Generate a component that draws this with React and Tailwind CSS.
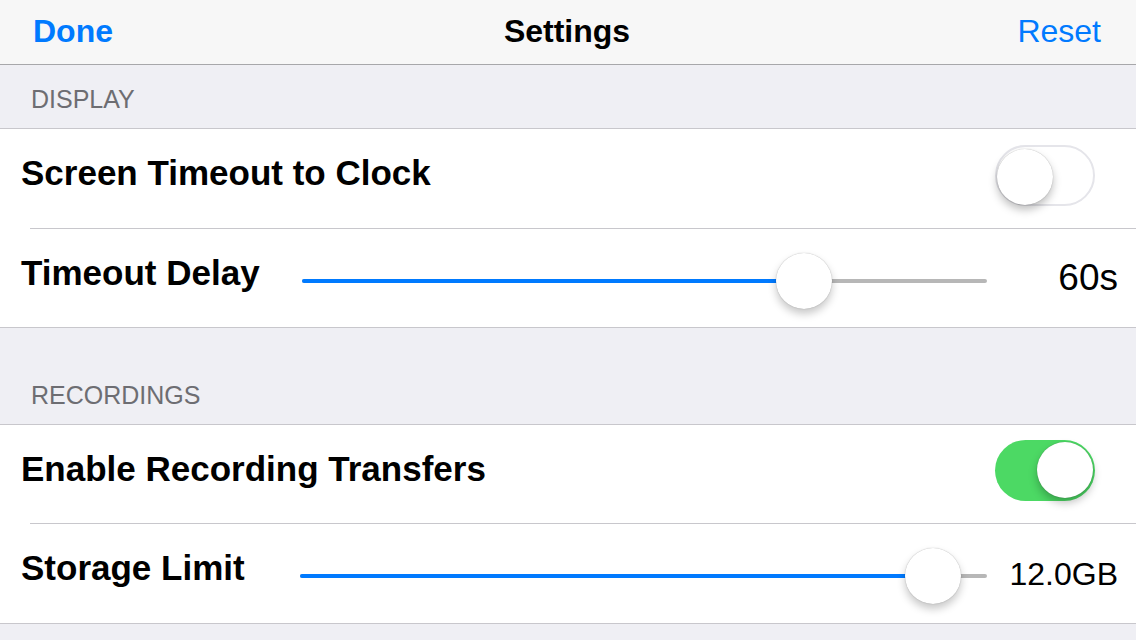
import React from "react";

const FONT = { fontFamily: '"Liberation Sans", Arial, sans-serif' };

function Toggle({ on }) {
  return (
    <div
      className={
        "relative mb-[7px] h-[61px] w-[100px] rounded-full " +
        (on ? "bg-[#4cd964]" : "border-2 border-[#e5e5ea] bg-white")
      }
    >
      <div
        className={
          "absolute top-[2px] h-[56px] w-[56px] rounded-full bg-white shadow-[0_5px_8px_rgba(0,0,0,0.25),0_0_1px_rgba(0,0,0,0.35)] " +
          (on ? "right-[2px]" : "left-0 top-0")
        }
      />
    </div>
  );
}

function Slider({ value }) {
  return (
    <div className="relative mt-[5px] h-14 flex-1">
      <div className="absolute left-0 right-0 top-1/2 h-[4px] -translate-y-1/2 rounded-full bg-[#b7b7b7]" />
      <div
        className="absolute left-0 top-1/2 h-[4px] -translate-y-1/2 rounded-full bg-[#007aff]"
        style={{ width: `${value * 100}%` }}
      />
      <div
        className="absolute top-1/2 h-[56px] w-[56px] -translate-x-1/2 -translate-y-1/2 rounded-full bg-white shadow-[0_5px_8px_rgba(0,0,0,0.22),0_0_1px_rgba(0,0,0,0.35)]"
        style={{ left: `${value * 100}%` }}
      />
    </div>
  );
}

function SectionHeader({ title, tall }) {
  return (
    <div
      className={
        "flex items-end border-b border-[#c8c7cc] bg-[#efeff4] pl-[31px] text-[25px] text-[#6d6d72] " +
        (tall ? "h-[97px] pb-[10px]" : "h-[64px] pb-[10px]")
      }
    >
      {title}
    </div>
  );
}

export default function App() {
  return (
    <div className="h-[640px] w-[1136px] overflow-hidden bg-[#efeff4]" style={FONT}>
      <div className="flex h-[65px] items-center justify-between border-b border-[#a7a7aa] bg-[#f7f7f7] pl-[33px] pr-[35px] pb-[3px]">
        <span className="w-[200px] text-[32px] font-bold text-[#007aff]">Done</span>
        <span className="text-[32px] font-bold text-black">Settings</span>
        <span className="w-[200px] text-right text-[32px] text-[#007aff]">Reset</span>
      </div>

      <SectionHeader title="DISPLAY" />
      <div className="bg-white">
        <div className="flex h-[99px] items-center justify-between pl-[21px] pr-[41px]">
          <span className="pb-[10px] text-[35px] font-bold text-black">Screen Timeout to Clock</span>
          <Toggle on={false} />
        </div>
        <div className="ml-[30px] h-px bg-[#c8c7cc]" />
        <div className="flex h-[99px] items-center border-b border-[#c8c7cc] pl-[21px] pr-[18px]">
          <span className="w-[281px] pb-[10px] text-[35px] font-bold text-black">Timeout Delay</span>
          <Slider value={0.733} />
          <span className="w-[131px] text-right text-[37px] text-black">60s</span>
        </div>
      </div>

      <SectionHeader title="RECORDINGS" tall />
      <div className="bg-white">
        <div className="flex h-[98px] items-center justify-between pl-[21px] pr-[41px]">
          <span className="pb-[10px] text-[35px] font-bold text-black">Enable Recording Transfers</span>
          <Toggle on />
        </div>
        <div className="ml-[30px] h-px bg-[#c8c7cc]" />
        <div className="flex h-[100px] items-center border-b border-[#c8c7cc] pl-[21px] pr-[18px]">
          <span className="w-[279px] pb-[10px] text-[35px] font-bold text-black">Storage Limit</span>
          <Slider value={0.921} />
          <span className="w-[131px] text-right text-[32px] text-black">12.0GB</span>
        </div>
      </div>
    </div>
  );
}
